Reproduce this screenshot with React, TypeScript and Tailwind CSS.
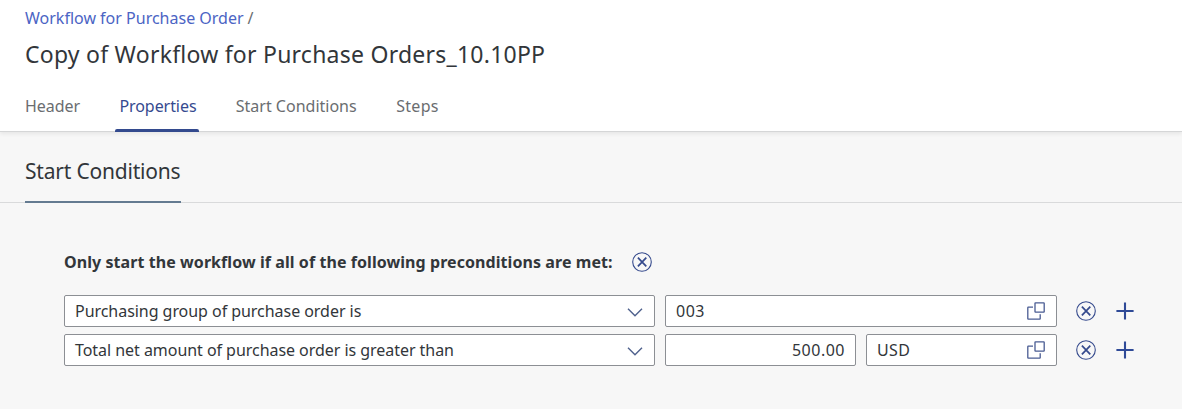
import React from 'react';
import clsx from 'clsx';

interface IconProps {
  className?: string;
}

const DeclineIcon: React.FC<IconProps> = ({ className }) => (
  <svg viewBox="0 0 20 20" className={clsx('h-5 w-5 shrink-0', className)} fill="none" stroke="#354a8d">
    <circle cx="10" cy="10" r="9.3" strokeWidth="1.1" />
    <path d="M5.9 5.6l8.4 8.8M14.3 5.6L5.9 14.4" strokeWidth="1.7" />
  </svg>
);

const AddIcon: React.FC<IconProps> = ({ className }) => (
  <svg viewBox="0 0 18 18" className={clsx('h-[18px] w-[18px] shrink-0', className)} fill="none" stroke="#2f4a97">
    <path d="M9 .6v16.8M.4 9h17.2" strokeWidth="2.1" />
  </svg>
);

const ValueHelpIcon: React.FC = () => (
  <svg viewBox="0 0 18 18" className="mr-px h-[18px] w-[18px] shrink-0" fill="none" stroke="#4a5c93" strokeWidth="1.3" strokeLinejoin="round">
    <rect x="8" y=".8" width="9.2" height="9.4" rx=".5" />
    <path d="M6 5.2H1.3a.5.5 0 0 0-.5.5v11a.5.5 0 0 0 .5.5h11.4a.5.5 0 0 0 .5-.5v-4.5" />
  </svg>
);

const ChevronIcon: React.FC = () => (
  <svg viewBox="0 0 16 9" className="mt-0.5 h-[9px] w-4 shrink-0" fill="none" stroke="#4f618d" strokeWidth="1.4">
    <path d="M1 .8l7 7 7-7" />
  </svg>
);

const tabs = [
  { id: 'header', label: 'Header', width: 'w-[55px] tracking-[-0.05px]' },
  { id: 'properties', label: 'Properties', width: 'w-[77px] tracking-[-0.06px]' },
  { id: 'startConditions', label: 'Start Conditions', width: 'w-[121px]' },
  { id: 'steps', label: 'Steps', width: 'w-[43px] tracking-[0.3px]' },
];

const fieldClass =
  'flex h-8 items-center rounded-[2px] border border-[#8c8f94] bg-white px-2.5 text-[16px] leading-5 whitespace-nowrap text-[#32363a]';

const ConditionSelect: React.FC<{ label: string }> = ({ label }) => (
  <div className={clsx(fieldClass, 'w-[591px] justify-between tracking-[-0.045px]')}>
    <span>{label}</span>
    <div className="mr-px">
      <ChevronIcon />
    </div>
  </div>
);

const RowActions: React.FC = () => (
  <div className="ml-[19px] flex items-center">
    <button type="button" aria-label="Remove">
      <DeclineIcon />
    </button>
    <button type="button" aria-label="Add" className="ml-5">
      <AddIcon />
    </button>
  </div>
);

const App: React.FC = () => {
  const activeTab = 'properties';

  return (
    <div className="h-[409px] w-[1182px] overflow-hidden bg-[#f7f7f7] font-['Noto_Sans','Open_Sans',sans-serif] text-[#32363a]">
      <header className="h-[132px] border-b border-[#d5d6d7] bg-white pl-[25px] shadow-[0_2px_4px_rgba(0,0,0,0.07)]">
        <div className="pt-[7px] text-[16px] leading-[22px] whitespace-nowrap">
          <a className="text-[#4b64c4]">Workflow for Purchase Order</a>
          <span className="ml-1 text-[#6a6d70]">/</span>
        </div>
        <h1 className="mt-[9px] text-[23px] leading-8 tracking-[0.24px] whitespace-nowrap text-[#32363a]">
          Copy of Workflow for Purchase Orders_10.10PP
        </h1>
        <nav className="mt-5 flex h-[42px] gap-[39.4px]">
          {tabs.map(tab => (
            <div
              key={tab.id}
              className={clsx(
                'relative pt-[5px] text-[16px] leading-[22px] whitespace-nowrap',
                tab.width,
                tab.id === activeTab ? 'text-[#354a8f]' : 'text-[#6a6d70]'
              )}
            >
              {tab.label}
              {tab.id === activeTab && <div className="absolute -right-[3px] bottom-0 -left-1 h-[3px] rounded-t-[2px] bg-[#334a8e]" />}
            </div>
          ))}
        </nav>
      </header>

      <section>
        <div className="flex h-[71px] border-b border-[#d9dadb] pl-[25px]">
          <h2 className="h-[71px] w-[156px] border-b-2 border-[#647b91] pt-[24px] text-[21px] leading-[30px] tracking-[-0.2px] whitespace-nowrap">
            Start Conditions
          </h2>
        </div>

        <div className="pt-[49px] pl-16">
          <div className="flex h-5 items-center">
            <span className="w-[568px] text-[16px] leading-5 font-bold tracking-[0.07px] whitespace-nowrap">
              Only start the workflow if all of the following preconditions are met:
            </span>
            <DeclineIcon />
          </div>

          <div className="mt-[23px] flex flex-col gap-[7px]">
            <div className="flex items-center">
              <ConditionSelect label="Purchasing group of purchase order is" />
              <div className={clsx(fieldClass, 'ml-2.5 w-[392px] justify-between')}>
                <span className="tracking-[0.5px]">003</span>
                <ValueHelpIcon />
              </div>
              <RowActions />
            </div>
            <div className="flex items-center">
              <ConditionSelect label="Total net amount of purchase order is greater than" />
              <div className={clsx(fieldClass, 'ml-2.5 w-[191px] justify-end')}>
                <span className="tracking-[0.5px]">500.00</span>
              </div>
              <div className={clsx(fieldClass, 'ml-2.5 w-[191px] justify-between')}>
                <span className="tracking-[0.4px]">USD</span>
                <ValueHelpIcon />
              </div>
              <RowActions />
            </div>
          </div>
        </div>
      </section>
    </div>
  );
};

export default App;
